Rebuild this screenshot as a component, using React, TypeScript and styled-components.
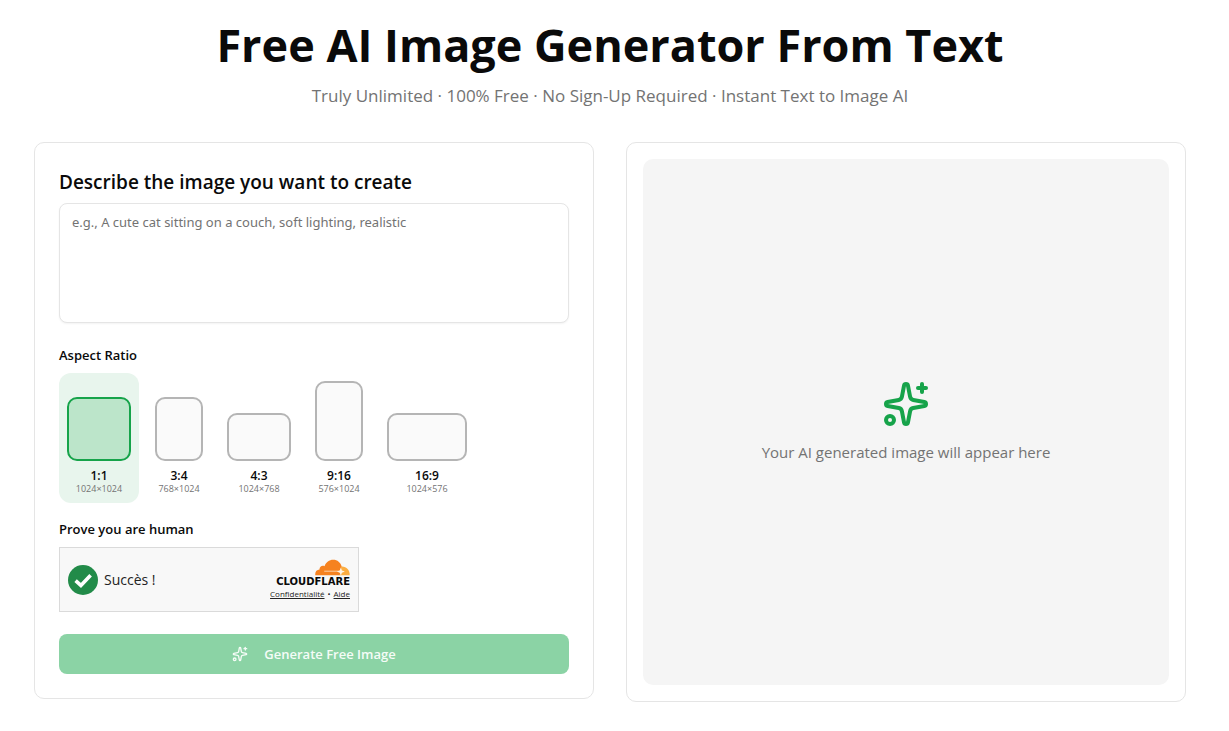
import React, { useState } from "react";
import styled, { createGlobalStyle } from "styled-components";
import { Sparkles } from "lucide-react";

const GlobalStyle = createGlobalStyle`
  *, *::before, *::after { box-sizing: border-box; }
  body {
    margin: 0;
    background: #ffffff;
    color: #0a0a0a;
    font-family: "Segoe UI", "Open Sans", "Noto Sans", sans-serif;
  }
`;

const Page = styled.main`
  padding: 18px 43px 29px 34px;
`;

const Header = styled.header`
  text-align: center;
  margin-bottom: 32px;
`;

const Title = styled.h1`
  margin: 0 0 10px;
  font-size: 45px;
  line-height: 54px;
  font-weight: 700;
`;

const Tagline = styled.p`
  margin: 0;
  font-size: 17px;
  line-height: 28px;
  color: #737373;
`;

const Columns = styled.div`
  display: grid;
  grid-template-columns: repeat(2, minmax(0, 1fr));
  gap: 32px;
  align-items: start;
  @media (max-width: 800px) {
    grid-template-columns: minmax(0, 1fr);
  }
`;

const Card = styled.section<{ $pad: number }>`
  border: 1px solid #e5e5e5;
  border-radius: 10px;
  background: #ffffff;
  padding: ${(p) => p.$pad}px;
`;

const Form = styled.form`
  display: flex;
  flex-direction: column;
  gap: 22px;
`;

const PromptField = styled.div`
  display: flex;
  flex-direction: column;
  gap: 6px;
`;

const PromptLabel = styled.label`
  font-size: 19px;
  line-height: 30px;
  font-weight: 600;
`;

const Prompt = styled.textarea`
  display: block;
  width: 100%;
  height: 120px;
  padding: 8px 12px;
  border: 1px solid #e5e5e5;
  border-radius: 8px;
  box-shadow: 0 1px 2px rgba(0, 0, 0, 0.05);
  background: #ffffff;
  color: inherit;
  font-family: "Segoe UI", "Noto Sans", sans-serif;
  font-size: 13px;
  line-height: 20px;
  resize: none;
  &::placeholder {
    color: #737373;
    opacity: 1;
  }
`;

const Settings = styled.div`
  display: flex;
  flex-direction: column;
  gap: 16px;
`;

const Group = styled.fieldset`
  margin: 0;
  padding: 0;
  border: 0;
  min-width: 0;
`;

const GroupLabel = styled.legend`
  padding: 0;
  margin-bottom: 8px;
  font-size: 13px;
  line-height: 20px;
  font-weight: 600;
`;

const Ratios = styled.div`
  display: flex;
  flex-wrap: wrap;
  align-items: flex-end;
  gap: 8px;
`;

const HiddenRadio = styled.input`
  appearance: none;
  position: absolute;
  inset: 0;
  margin: 0;
  border-radius: 12px;
  cursor: pointer;
`;

const RatioOption = styled.label<{ $active: boolean }>`
  position: relative;
  display: flex;
  flex-direction: column;
  align-items: center;
  justify-content: flex-end;
  height: 130px;
  padding: 8px;
  border-radius: 12px;
  background: ${(p) => (p.$active ? "#e8f5ed" : "transparent")};
`;

const RatioShape = styled.span<{ $w: number; $h: number; $active: boolean }>`
  width: ${(p) => p.$w}px;
  height: ${(p) => p.$h}px;
  margin-bottom: 7px;
  border: 2px solid ${(p) => (p.$active ? "#16a34a" : "#b5b5b5")};
  border-radius: 10px;
  background: ${(p) => (p.$active ? "#bce5ca" : "#fafafa")};
`;

const RatioName = styled.span`
  font-size: 12px;
  line-height: 15px;
  font-weight: 600;
`;

const RatioSize = styled.span`
  font-size: 9px;
  line-height: 12px;
  color: #737373;
  white-space: nowrap;
`;

const Captcha = styled.div`
  display: flex;
  align-items: center;
  justify-content: space-between;
  width: 300px;
  max-width: 100%;
  height: 65px;
  padding: 0 8px;
  border: 1px solid #dadada;
  background: #f8f8f8;
`;

const CaptchaStatus = styled.div`
  display: flex;
  align-items: center;
  gap: 6px;
  font-size: 14px;
  line-height: 20px;
  color: #232323;
`;

const CaptchaBrand = styled.div`
  display: flex;
  flex-direction: column;
  align-items: flex-end;
`;

const Wordmark = styled.span`
  font-family: "DejaVu Sans", sans-serif;
  font-size: 10px;
  line-height: 12px;
  font-weight: 700;
  color: #0a0a0a;
`;

const CaptchaLinks = styled.div`
  display: flex;
  gap: 3px;
  font-size: 8px;
  line-height: 12px;
  color: #232323;
  a {
    color: inherit;
    text-decoration: underline;
  }
`;

const GenerateButton = styled.button`
  display: flex;
  align-items: center;
  justify-content: center;
  gap: 16px;
  width: 100%;
  height: 40px;
  padding: 0 16px;
  border: 0;
  border-radius: 8px;
  background: #8bd3a5;
  color: #f5fcf7;
  font: inherit;
  font-size: 13px;
  line-height: 20px;
  font-weight: 600;
`;

const Preview = styled.div`
  display: flex;
  flex-direction: column;
  align-items: center;
  justify-content: center;
  gap: 12px;
  aspect-ratio: 1;
  border-radius: 10px;
  background: #f5f5f5;
  color: #16a34a;
`;

const PreviewText = styled.p`
  margin: 0;
  font-size: 15px;
  line-height: 24px;
  color: #737373;
`;

const RATIOS = [
  { name: "1:1", size: "1024×1024", w: 64, h: 64 },
  { name: "3:4", size: "768×1024", w: 48, h: 64 },
  { name: "4:3", size: "1024×768", w: 64, h: 48 },
  { name: "9:16", size: "576×1024", w: 48, h: 80 },
  { name: "16:9", size: "1024×576", w: 80, h: 48 },
];

function CheckBadge() {
  return (
    <svg width="30" height="30" viewBox="0 0 30 30" aria-hidden="true">
      <circle cx="15" cy="15" r="15" fill="#228b49" />
      <path d="M7.6 15.6 12.9 20.4 22.6 10.2" fill="none" stroke="#fff" strokeWidth="3.6" />
    </svg>
  );
}

function CloudLogo() {
  return (
    <svg width="35" height="17" viewBox="0 0 36 17" aria-hidden="true">
      <path
        d="M.3 16.5C-.2 13 1.800 10.700 4.700 10.600 4.300 7.600 7.400 5.800 9.800 7.200 11.200 2.800 14.800.4 18.600.4c4.500 0 7.800 2.800 8.900 7.100l-2 9z"
        fill="#f6821f"
      />
      <path
        d="M25.400 16.500 27 7.500c5-.5 8.900 3.500 8.700 9z"
        fill="#fbad41"
      />
      <path d="M9.500 12.300h16.200" stroke="#fcd5ad" strokeWidth="1" />
      <path
        d="m26.600 8.600 1.100 2.900 3 1.100-3 1.200-1.100 2.900-1.200-2.900-2.900-1.200 2.900-1.100z"
        fill="#fff6e9"
      />
    </svg>
  );
}

export default function App() {
  const [ratio, setRatio] = useState("1:1");
  return (
    <>
      <GlobalStyle />
      <Page>
        <Header>
          <Title>Free AI Image Generator From Text</Title>
          <Tagline>Truly Unlimited · 100% Free · No Sign-Up Required · Instant Text to Image AI</Tagline>
        </Header>
        <Columns>
          <Card $pad={24}>
            <Form onSubmit={(e) => e.preventDefault()}>
              <PromptField>
                <PromptLabel htmlFor="prompt">Describe the image you want to create</PromptLabel>
                <Prompt id="prompt" placeholder="e.g., A cute cat sitting on a couch, soft lighting, realistic" />
              </PromptField>
              <Settings>
                <Group>
                  <GroupLabel>Aspect Ratio</GroupLabel>
                  <Ratios>
                    {RATIOS.map((r) => (
                      <RatioOption key={r.name} $active={r.name === ratio}>
                        <HiddenRadio
                          type="radio"
                          name="ratio"
                          value={r.name}
                          checked={r.name === ratio}
                          onChange={() => setRatio(r.name)}
                        />
                        <RatioShape $w={r.w} $h={r.h} $active={r.name === ratio} />
                        <RatioName>{r.name}</RatioName>
                        <RatioSize>{r.size}</RatioSize>
                      </RatioOption>
                    ))}
                  </Ratios>
                </Group>
                <Group>
                  <GroupLabel>Prove you are human</GroupLabel>
                  <Captcha>
                    <CaptchaStatus role="status">
                      <CheckBadge />
                      Succès !
                    </CaptchaStatus>
                    <CaptchaBrand>
                      <CloudLogo />
                      <Wordmark>CLOUDFLARE</Wordmark>
                      <CaptchaLinks>
                        <a href="#privacy">Confidentialité</a>
                        <span>•</span>
                        <a href="#help">Aide</a>
                      </CaptchaLinks>
                    </CaptchaBrand>
                  </Captcha>
                </Group>
              </Settings>
              <GenerateButton type="submit">
                <Sparkles size={16} aria-hidden="true" />
                Generate Free Image
              </GenerateButton>
            </Form>
          </Card>
          <Card $pad={16}>
            <Preview>
              <Sparkles size={48} aria-hidden="true" />
              <PreviewText>Your AI generated image will appear here</PreviewText>
            </Preview>
          </Card>
        </Columns>
      </Page>
    </>
  );
}
